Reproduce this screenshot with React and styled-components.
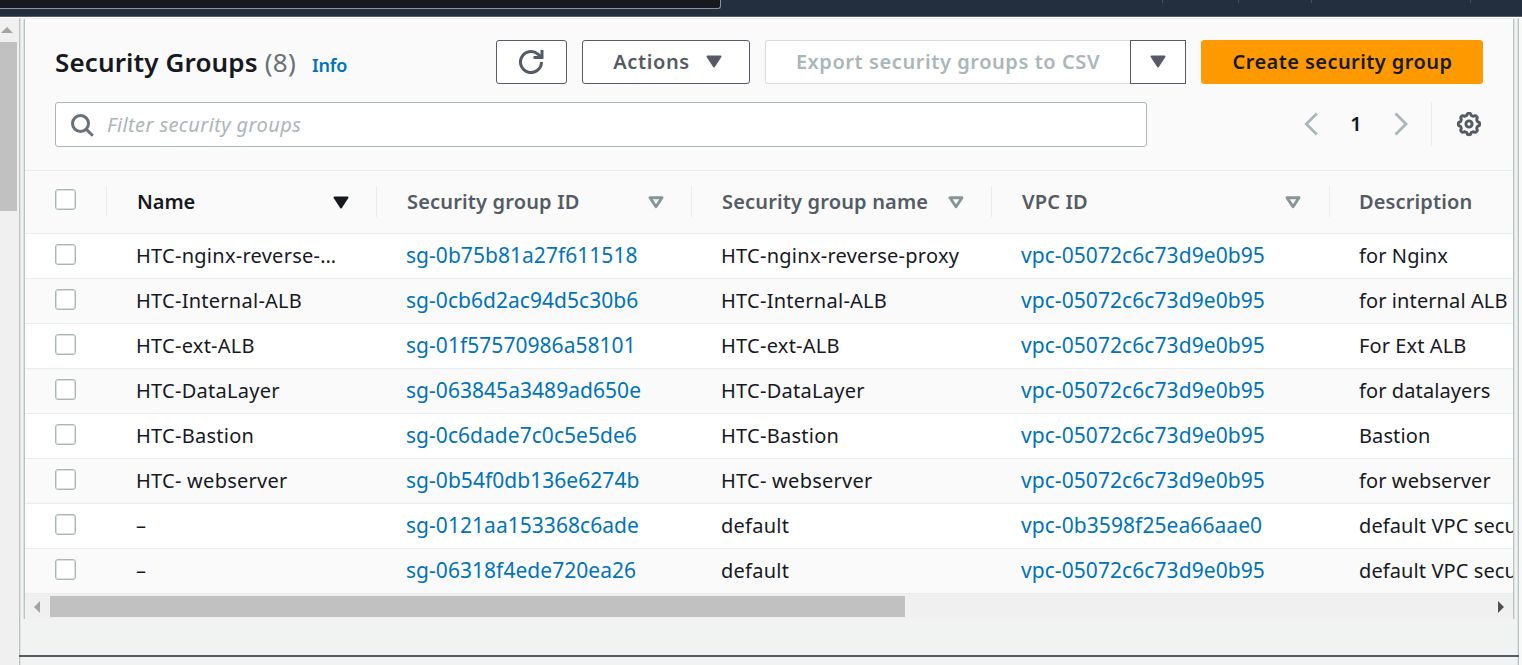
import React from 'react';
import styled, { createGlobalStyle } from 'styled-components';

const Global = createGlobalStyle`
  * { box-sizing: border-box; }
  body { margin: 0; background: #f7f8f8; font-family: "Noto Sans", "Open Sans", sans-serif; color: #16191f; overflow: hidden; }
`;
const Page = styled.div`width: 1522px; height: 665px; display: flex; flex-direction: column; overflow: hidden;`;
const TopBar = styled.header`
  height: 17px; flex: none; background: #232f3e; border-bottom: 1px solid #545b64;
  display: flex; align-items: flex-start; justify-content: space-between;
`;
const TopSearch = styled.div`
  width: 721px; height: 9px; background: #16191f; border: solid #879596; border-width: 0 1px 1px 0; border-radius: 0 0 3px 0;
`;
const Ticks = styled.div`display: flex; width: 361px;`;
const Tick = styled.i`width: 1px; height: 3px; background: #414d5c; margin-left: ${p => p.$gap}px;`;
const Body = styled.div`flex: 1; display: flex; min-height: 0; border-top: 1px solid #fff;`;
const VScroll = styled.div`
  width: 19px; flex: none; background: #f0f0f0; padding-top: 9px;
  svg { display: block; margin-left: 1px; }
`;
const VThumb = styled.div`width: 17px; height: 169px; background: #c1c1c1; margin-top: 9px;`;
const Main = styled.main`
  width: 1500px; flex: none; background: #f1f3f3; border: solid #bac4c5; border-width: 0 1px;
  box-shadow: inset 1px 0 0 #dde2e2, inset -1px 0 0 #dde2e2;
  display: flex; flex-direction: column; padding-left: 1px;
`;
const PanelWrap = styled.div`border-top: 1px solid #eaeded; padding: 0 4px 0 3px;`;
const Panel = styled.section`
  height: 600px; border: solid #bac4c5; border-width: 0 1px; background: #fafafa; overflow: hidden;
  box-shadow: -1px 0 0 #dde2e2, 1px 0 0 #dde2e2;
`;
const SplitLine = styled.div`height: 2px; margin: 36px -1px 0 -2px; background: #545b64;`;

const HeaderRow = styled.div`display: flex; align-items: center; height: 44px; margin-top: 21px; padding: 0 30px;`;
const Title = styled.h2`
  margin: 2px 0 0; flex: 1; display: flex; align-items: baseline; font-size: 26px; line-height: 44px; white-space: nowrap; font-weight: 700;
`;
const TitleText = styled.span`letter-spacing: 0.13px; font-weight: 600;`;
const Count = styled.span`font-weight: 400; color: #687078; margin-left: 7px; letter-spacing: 0.3px;`;
const Info = styled.a`font-size: 18px; color: #0073bb; margin-left: 16px; font-weight: 600; letter-spacing: -0.2px;`;
const Button = styled.button`
  height: 44px; width: ${p => p.$w}px; margin-left: ${p => p.$ml ?? 15}px; padding: 0 0 2px ${p => p.$pl || 0}px; flex: none;
  border: 1px solid ${p => (p.$primary ? '#ff9900' : p.$disabled ? '#d5dbdb' : '#545b64')};
  border-radius: ${p => p.$radius || '3px'};
  background: ${p => (p.$primary ? '#ff9900' : '#fff')};
  color: ${p => (p.$primary ? '#16191f' : p.$disabled ? '#aab7b8' : '#545b64')};
  font: 600 20px "Noto Sans", "Open Sans", sans-serif; letter-spacing: ${p => p.$ls || 0}px;
  display: flex; align-items: center; justify-content: center; gap: 16px; white-space: nowrap;
  ${p => p.$disabled && 'border-right: 0;'}
`;
const ToolRow = styled.div`display: flex; align-items: center; height: 45px; margin-top: 18px; padding: 0 30px;`;
const Search = styled.div`
  width: 1092px; flex: none; height: 45px; background: #fff; border: 1px solid #aab7b8; border-radius: 3px; display: flex; align-items: center; padding-left: 15px;
`;
const Placeholder = styled.span`font-style: italic; font-size: 20px; color: #aab7b8; margin-left: 12px; letter-spacing: 0.4px;`;
const Pager = styled.div`margin-left: 157px; display: flex; align-items: center; padding-bottom: 2px;`;
const PageNo = styled.b`width: 16px; margin: 0 29px 0 28px; font-size: 20px; font-weight: 600; text-align: center;`;
const GearBox = styled.div`height: 44px; margin: 0 0 1px 22px; padding-left: 24px; border-left: 1px solid #eaeded; display: flex; align-items: center;`;

const columns = '81px 270px 315px 300px 338px 400px';
const HeadRow = styled.div`
  display: grid; grid-template-columns: ${columns}; height: 64px; margin-top: 23px; align-items: center;
  border: solid #eaeded; border-width: 1px 0;
`;
const HeadCell = styled.div`
  height: 31px; margin-top: -1px; display: flex; align-items: center; justify-content: space-between; padding: 0 27px 0 30px;
  border-left: 1px solid #eaeded; font-size: 20px; font-weight: 600; color: ${p => (p.$active ? '#16191f' : '#545b64')};
  letter-spacing: ${p => (p.$active ? -0.05 : 0.16)}px; white-space: nowrap; line-height: 30px;
  svg { margin-top: 1px; }
  &:nth-child(5) { padding-right: 28px; }
  &:nth-child(6) { padding-left: 29px; letter-spacing: 0.13px; }
`;
const Row = styled.div`
  display: grid; grid-template-columns: ${columns}; height: 45px; align-items: center;
  background: ${p => (p.$even ? '#fafafa' : '#fff')}; border-bottom: 1px solid #eaeded;
`;
const Cell = styled.div`
  padding: 0 30px; font-size: ${p => (p.$link ? 21 : 20)}px; line-height: ${p => (p.$link ? 42 : 44)}px; 
  padding-bottom: ${p => (p.$link ? 2 : 0)}px; white-space: nowrap; overflow: hidden; text-overflow: ellipsis;
  color: ${p => (p.$link ? '#0073bb' : '#16191f')}; letter-spacing: ${p => p.$ls}px;
`;
const CheckCell = styled.div`padding-left: 30px; margin-top: ${p => (p.$head ? -5 : -3)}px;`;
const Checkbox = styled.div`width: 21px; height: 21px; background: #fff; border: 1px solid #aab7b8; border-radius: 3px; box-shadow: inset 0 0 0 1px #d9dfdf;`;
const HScroll = styled.div`
  height: 25px; background: #f0f0f0; display: flex; align-items: center; padding: 0 9px;
`;
const HThumb = styled.div`width: 855px; height: 21px; background: #c1c1c1; margin: 0 auto 0 10px;`;

const Caret = ({ color }) => (
  <svg width="16" height="13" viewBox="0 0 16 13"><path d="M1.5 1.5H14.5L8 11.5Z" fill={color} stroke={color} strokeWidth="2" strokeLinejoin="round" /></svg>
);
const SortIcon = () => (
  <svg width="16" height="13" viewBox="0 0 16 13"><path d="M2 1.7H14L8 10.8Z" fill="none" stroke="#879596" strokeWidth="2.9" strokeLinejoin="round" /></svg>
);
const Arrow = ({ dir }) => (
  <svg width="16" height="24" viewBox="0 0 16 24"><path d={dir === 'left' ? 'M12.8 1.5L2.3 12l10.5 10.5' : 'M2.5 1.5L13 12 2.5 22.5'} fill="none" stroke="#aab7b8" strokeWidth="2.8" /></svg>
);
const Refresh = () => (
  <svg width="26" height="26" viewBox="0 0 26 26" fill="none" stroke="#545b64" strokeWidth="3"><path d="M22.5 14A10.5 10.5 0 1 1 18.9 6.1L21.5 8.4" /><path d="M23 2v7.5H14.5" /></svg>
);
const Magnifier = () => (
  <svg width="24" height="24" viewBox="0 0 24 24" fill="none" stroke="#687078" strokeWidth="3"><circle cx="9.5" cy="10.5" r="8" /><path d="M15.5 16.5l6.3 6.3" /></svg>
);
const Gear = () => {
  const pts = Array.from({ length: 96 }, (_, i) => {
    const a = (i / 96) * Math.PI * 2;
    const r = 9.7 + 1 * Math.tanh(2.2 * Math.cos(8 * a));
    return `${(13 + r * Math.sin(a)).toFixed(2)},${(12 - r * Math.cos(a)).toFixed(2)}`;
  }).join(' ');
  return (
    <svg width="25" height="25" viewBox="0 0 25 25" fill="none" stroke="#545b64" strokeWidth="2.9" strokeLinejoin="round">
      <polygon points={pts} /><circle cx="13" cy="12" r="3.1" />
    </svg>
  );
};

const mainVpc = 'vpc-05072c6c73d9e0b95';
const rows = [
  ['HTC-nginx-reverse-proxy', 'sg-0b75b81a27f611518', 'HTC-nginx-reverse-proxy', mainVpc, 'for Nginx'],
  ['HTC-Internal-ALB', 'sg-0cb6d2ac94d5c30b6', 'HTC-Internal-ALB', mainVpc, 'for internal ALB'],
  ['HTC-ext-ALB', 'sg-01f57570986a58101', 'HTC-ext-ALB', mainVpc, 'For Ext ALB'],
  ['HTC-DataLayer', 'sg-063845a3489ad650e', 'HTC-DataLayer', mainVpc, 'for datalayers'],
  ['HTC-Bastion', 'sg-0c6dade7c0c5e5de6', 'HTC-Bastion', mainVpc, 'Bastion'],
  ['HTC- webserver', 'sg-0b54f0db136e6274b', 'HTC- webserver', mainVpc, 'for webserver'],
  ['–', 'sg-0121aa153368c6ade', 'default', 'vpc-0b3598f25ea66aae0', 'default VPC security group'],
  ['–', 'sg-06318f4ede720ea26', 'default', mainVpc, 'default VPC security group'],
];
const heads = ['Name', 'Security group ID', 'Security group name', 'VPC ID', 'Description'];
const tracking = [0.26, 0.04, 0.26, 0.07, 0.1];

export default function App() {
  return (
    <Page>
      <Global />
      <TopBar>
        <TopSearch />
        <Ticks><Tick $gap={1} /><Tick $gap={75} /><Tick $gap={72} /><Tick $gap={158} /></Ticks>
      </TopBar>
      <Body>
        <VScroll>
          <svg width="12" height="6"><path d="M0 6L6 0l6 6z" fill="#a3a3a3" /></svg>
          <VThumb />
        </VScroll>
        <Main>
          <PanelWrap>
            <Panel>
              <HeaderRow>
                <Title><TitleText>Security Groups</TitleText><Count>(8)</Count><Info>Info</Info></Title>
                <Button $w={71} aria-label="Refresh"><Refresh /></Button>
                <Button $w={168} $ls={0.6} $pl={3}>Actions<Caret color="#545b64" /></Button>
                <Button $w={365} $ls={0.57} $disabled $radius="3px 0 0 3px">Export security groups to CSV</Button>
                <Button $w={56} $ml={0} $radius="0" aria-label="Export options"><Caret color="#545b64" /></Button>
                <Button $w={282} $ls={0.43} $pl={1} $primary>Create security group</Button>
              </HeaderRow>
              <ToolRow>
                <Search><Magnifier /><Placeholder>Filter security groups</Placeholder></Search>
                <Pager><Arrow dir="left" /><PageNo>1</PageNo><Arrow dir="right" /></Pager>
                <GearBox><Gear /></GearBox>
              </ToolRow>
              <HeadRow>
                <CheckCell $head><Checkbox /></CheckCell>
                {heads.map((h, i) => (
                  <HeadCell key={h} $active={i === 0}>{h}{i === 0 ? <Caret color="#16191f" /> : i < 4 && <SortIcon />}</HeadCell>
                ))}
              </HeadRow>
              {rows.map((r, n) => (
                <Row key={r[1]} $even={n % 2 === 1}>
                  <CheckCell><Checkbox /></CheckCell>
                  {r.map((t, i) => <Cell key={i} $link={i === 1 || i === 3} $ls={tracking[i]}>{t}</Cell>)}
                </Row>
              ))}
              <HScroll>
                <svg width="6" height="12"><path d="M6 0L0 6l6 6z" fill="#a3a3a3" /></svg>
                <HThumb />
                <svg width="6" height="12"><path d="M0 0l6 6-6 6z" fill="#505050" /></svg>
              </HScroll>
            </Panel>
          </PanelWrap>
          <SplitLine />
        </Main>
      </Body>
    </Page>
  );
}
